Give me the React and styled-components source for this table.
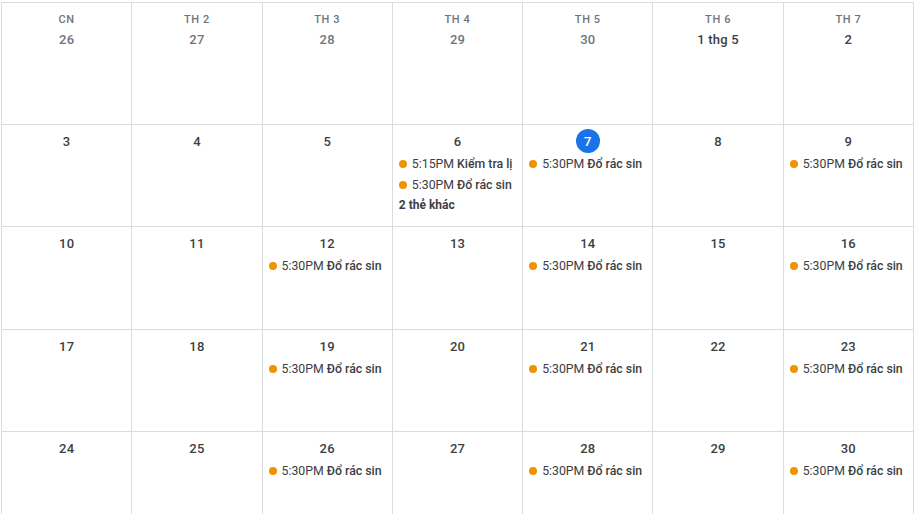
import React from "react";
import styled, { createGlobalStyle } from "styled-components";

const Global = createGlobalStyle`
  html, body { margin: 0; padding: 0; background: #fff; overflow: hidden; }
  body { font-family: Roboto, "Noto Sans", Arial, sans-serif; }
`;

const Page = styled.div`
  width: 914px;
  height: 514px;
  padding: 2px 0 0 1px;
  box-sizing: border-box;
  overflow: hidden;
`;

const Grid = styled.div`
  display: grid;
  grid-template-columns: repeat(7, 1fr);
  grid-template-rows: 122px 102px 103px 102px 102px;
  width: 913px;
  border-top: 1px solid #dadce0;
  border-left: 1px solid #dadce0;
  box-sizing: border-box;
`;

const Cell = styled.div`
  border-right: 1px solid #dadce0;
  border-bottom: 1px solid #dadce0;
  display: flex;
  flex-direction: column;
  align-items: stretch;
  padding-top: ${(p) => (p.$first ? "9px" : "4px")};
  min-width: 0;
  overflow: hidden;
`;

const Weekday = styled.div`
  font-size: 11px;
  font-weight: 500;
  line-height: 15px;
  color: #70757a;
  text-align: center;
  letter-spacing: 0.6px;
`;

const DateRow = styled.div`
  display: flex;
  justify-content: center;
  height: 24px;
  align-items: center;
  margin-bottom: 1px;
`;

const DateNum = styled.div`
  min-width: 24px;
  height: 24px;
  padding: 0 4px;
  box-sizing: border-box;
  border-radius: 12px;
  display: flex;
  align-items: center;
  justify-content: center;
  font-size: 13px;
  font-weight: 500;
  letter-spacing: 0.2px;
  color: ${(p) => (p.$today ? "#fff" : p.$other ? "#70757a" : "#3c4043")};
  background: ${(p) => (p.$today ? "#1a73e8" : "transparent")};
  ${(p) => (p.$today ? "width: 24px; padding: 0;" : "")}
`;

const Event = styled.div`
  display: flex;
  align-items: center;
  height: 20px;
  margin: 0 10px 1px 6px;
  overflow: hidden;
  white-space: nowrap;
  font-size: 12.3px;
  color: #3c4043;
`;

const Dot = styled.span`
  flex: none;
  width: 8px;
  height: 8px;
  border-radius: 50%;
  background: #f09300;
  margin: 0 5px 0 0;
`;

const Time = styled.span`
  font-weight: 400;
  margin-right: 3px;
`;

const Title = styled.span`
  font-weight: 500;
`;

const More = styled.div`
  height: 18px;
  line-height: 18px;
  margin: 0 12px 0 6px;
  font-size: 12px;
  font-weight: 700;
  color: #3c4043;
  white-space: nowrap;
`;

const weekdays = ["CN", "TH 2", "TH 3", "TH 4", "TH 5", "TH 6", "TH 7"];

const trash = { time: "5:30PM", title: "Đổ rác sinh hoạt" };

const weeks = [
  [
    { d: "26", other: true },
    { d: "27", other: true },
    { d: "28", other: true },
    { d: "29", other: true },
    { d: "30", other: true },
    { d: "1 thg 5" },
    { d: "2" },
  ],
  [
    { d: "3" },
    { d: "4" },
    { d: "5" },
    {
      d: "6",
      events: [{ time: "5:15PM", title: "Kiểm tra lịch" }, trash],
      more: "2 thẻ khác",
    },
    { d: "7", today: true, events: [trash] },
    { d: "8" },
    { d: "9", events: [trash] },
  ],
  [
    { d: "10" },
    { d: "11" },
    { d: "12", events: [trash] },
    { d: "13" },
    { d: "14", events: [trash] },
    { d: "15" },
    { d: "16", events: [trash] },
  ],
  [
    { d: "17" },
    { d: "18" },
    { d: "19", events: [trash] },
    { d: "20" },
    { d: "21", events: [trash] },
    { d: "22" },
    { d: "23", events: [trash] },
  ],
  [
    { d: "24" },
    { d: "25" },
    { d: "26", events: [trash] },
    { d: "27" },
    { d: "28", events: [trash] },
    { d: "29" },
    { d: "30", events: [trash] },
  ],
];

export default function App() {
  return (
    <>
      <Global />
      <Page>
        <Grid>
          {weeks.map((week, wi) =>
            week.map((day, di) => (
              <Cell key={`${wi}-${di}`} $first={wi === 0}>
                {wi === 0 && <Weekday>{weekdays[di]}</Weekday>}
                <DateRow>
                  <DateNum $today={day.today} $other={day.other}>
                    {day.d}
                  </DateNum>
                </DateRow>
                {(day.events || []).map((ev, ei) => (
                  <Event key={ei}>
                    <Dot />
                    <Time>{ev.time}</Time>
                    <Title>{ev.title}</Title>
                  </Event>
                ))}
                {day.more && <More>{day.more}</More>}
              </Cell>
            ))
          )}
        </Grid>
      </Page>
    </>
  );
}
